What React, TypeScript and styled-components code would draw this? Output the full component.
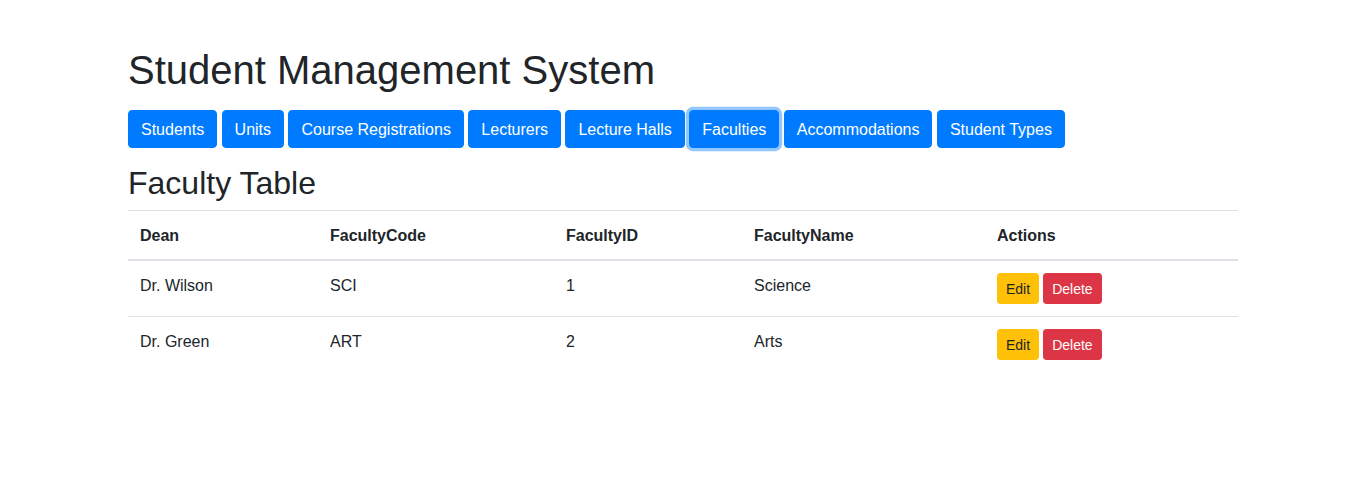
import styled, { createGlobalStyle } from "styled-components";

const GlobalStyle = createGlobalStyle`
  body {
    margin: 0;
    font-family: "Liberation Sans", Arial, sans-serif;
    font-size: 16px;
    line-height: 1.5;
    color: #212529;
    background: #fff;
  }
  * {
    box-sizing: border-box;
  }
`;

const navItems = [
  "Students",
  "Units",
  "Course Registrations",
  "Lecturers",
  "Lecture Halls",
  "Faculties",
  "Accommodations",
  "Student Types",
];

const faculties = [
  { dean: "Dr. Wilson", code: "SCI", id: 1, name: "Science" },
  { dean: "Dr. Green", code: "ART", id: 2, name: "Arts" },
];

const columns = [
  { label: "Dean", width: 190 },
  { label: "FacultyCode", width: 236 },
  { label: "FacultyID", width: 188 },
  { label: "FacultyName", width: 243 },
  { label: "Actions", width: 253 },
];

const App = () => {
  return (
    <>
      <GlobalStyle />
      <Container>
        <Title>Student Management System</Title>
        <Nav>
          {navItems.map((item) => (
            <NavButton key={item} $focused={item === "Faculties"}>
              {item}
            </NavButton>
          ))}
        </Nav>
        <SubTitle>Faculty Table</SubTitle>
        <Table>
          <thead>
            <tr>
              {columns.map((col) => (
                <Th key={col.label} style={{ width: col.width }}>
                  {col.label}
                </Th>
              ))}
            </tr>
          </thead>
          <tbody>
            {faculties.map((f) => (
              <tr key={f.id}>
                <Td>{f.dean}</Td>
                <Td>{f.code}</Td>
                <Td>{f.id}</Td>
                <Td>{f.name}</Td>
                <Td>
                  <Actions>
                    <SmallButton $variant="warning">Edit</SmallButton>
                    <SmallButton $variant="danger">Delete</SmallButton>
                  </Actions>
                </Td>
              </tr>
            ))}
          </tbody>
        </Table>
      </Container>
    </>
  );
};

const Container = styled.div`
  width: 1110px;
  margin: 0 0 0 128px;
  padding-top: 46px;
`;

const Title = styled.h1`
  margin: 0 0 16px;
  font-size: 40px;
  font-weight: 500;
  line-height: 1.2;
`;

const Nav = styled.div`
  display: flex;
  flex-wrap: wrap;
  gap: 4.45px;
`;

const NavButton = styled.button<{ $focused?: boolean }>`
  font-family: inherit;
  font-size: 16px;
  line-height: 1.5;
  padding: 7px 12px 5px;
  color: #fff;
  background: #007bff;
  border: 1px solid #007bff;
  border-radius: 4px;
  cursor: pointer;
  box-shadow: ${(p) => (p.$focused ? "0 0 0 3.2px rgba(38, 143, 255, 0.5)" : "none")};
`;

const SubTitle = styled.h2`
  margin: 16px 0 8px;
  font-size: 32px;
  font-weight: 500;
  line-height: 1.2;
`;

const Table = styled.table`
  width: 100%;
  border-collapse: collapse;
  table-layout: fixed;
`;

const Th = styled.th`
  text-align: left;
  font-weight: 700;
  padding: 13px 12px 11px;
  vertical-align: bottom;
  border-top: 1px solid #dee2e6;
  border-bottom: 2px solid #dee2e6;
`;

const Td = styled.td`
  padding: 13px 12px 11px;
  vertical-align: top;
  border-top: 1px solid #dee2e6;
`;

const Actions = styled.div`
  display: flex;
  gap: 4px;
  margin: -1px 0 1px;
`;

const SmallButton = styled.button<{ $variant: "warning" | "danger" }>`
  font-family: inherit;
  font-size: 14px;
  line-height: 1.5;
  padding: 5px 8px 3px;
  border-radius: 3.2px;
  cursor: pointer;
  color: ${(p) => (p.$variant === "warning" ? "#212529" : "#fff")};
  background: ${(p) => (p.$variant === "warning" ? "#ffc107" : "#dc3545")};
  border: 1px solid ${(p) => (p.$variant === "warning" ? "#ffc107" : "#dc3545")};
`;

export default App;
